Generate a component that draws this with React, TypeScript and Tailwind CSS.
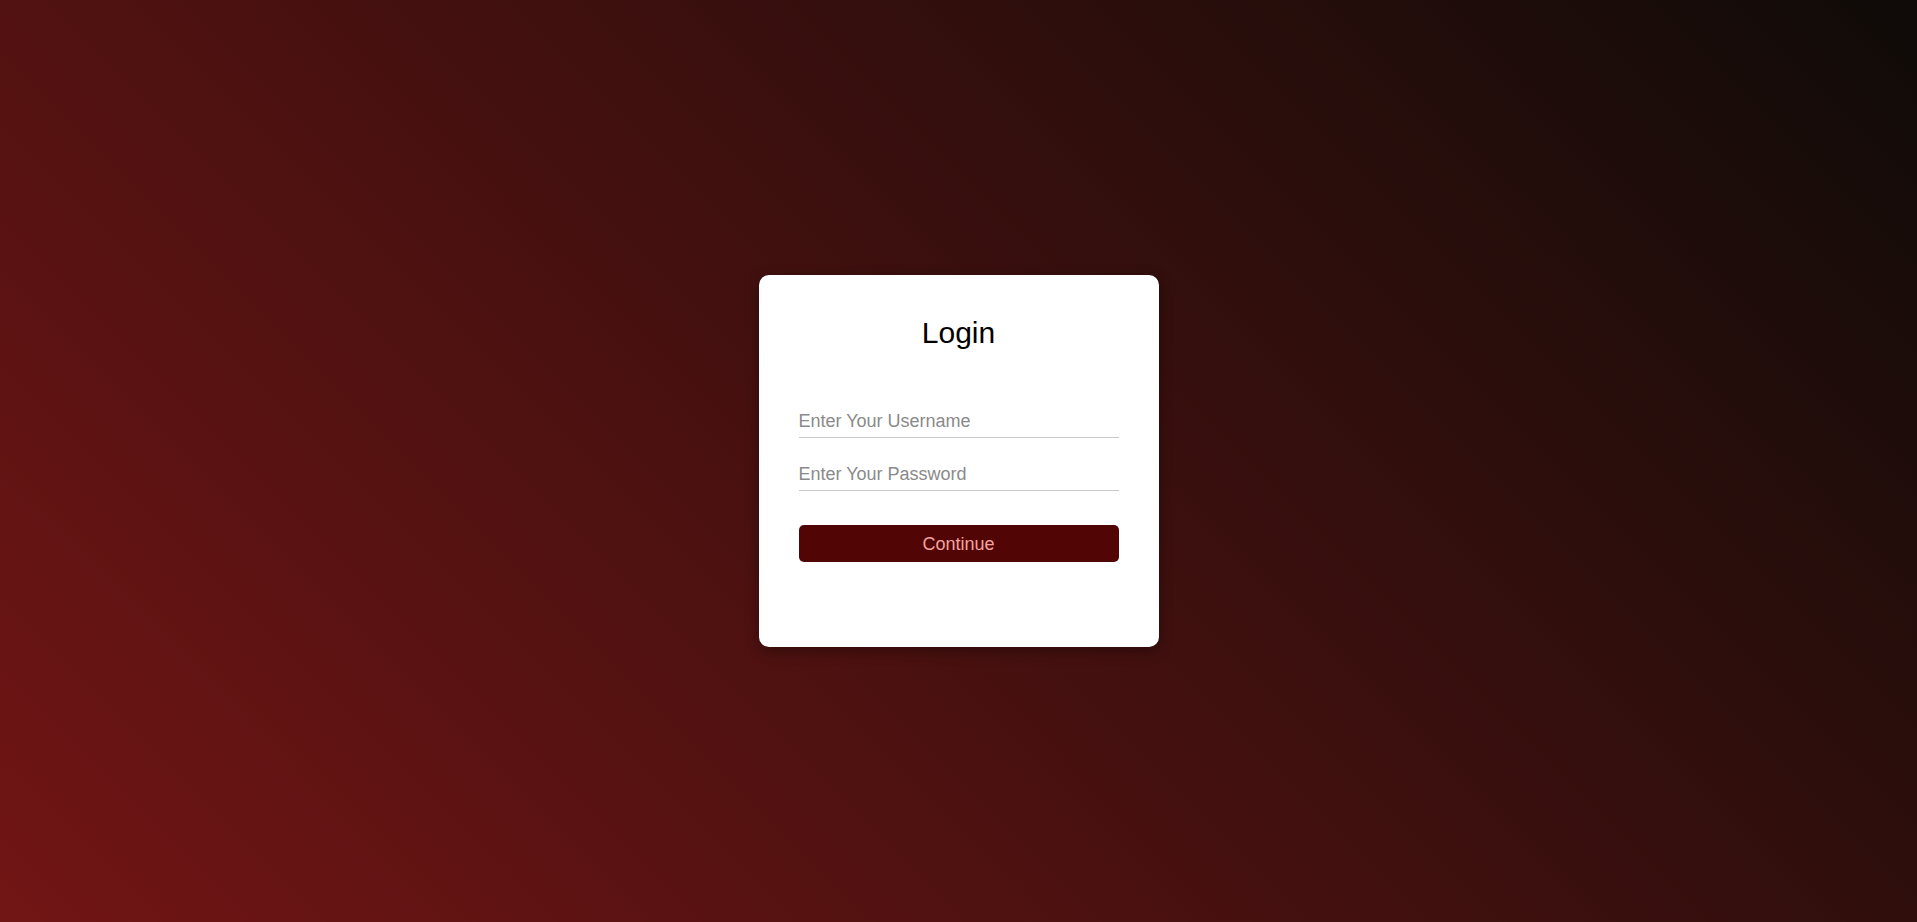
import React, { useState } from 'react';

const App: React.FC = () => {
  const [username, setUsername] = useState<string>('');
  const [password, setPassword] = useState<string>('');

  return (
    <div className="min-h-screen w-full flex items-center justify-center bg-[linear-gradient(45deg,#721515,#0f0b08)] font-['Liberation_Sans',Arial,sans-serif]">
      <div className="w-[400px] h-[372px] bg-white rounded-[10px] shadow-[0_4px_14px_rgba(0,0,0,0.35)] px-10 pt-10 flex flex-col">
        <h1 className="text-[30px] leading-9 text-black text-center">Login</h1>

        <form className="flex flex-col mt-[52px]" onSubmit={(e) => e.preventDefault()}>
          <input
            type="text"
            value={username}
            onChange={(e) => setUsername(e.target.value)}
            placeholder="Enter Your Username"
            className="w-full text-[18px] leading-7 pt-1 pb-0.5 border-b border-[#c8c8c8] outline-none text-black placeholder:text-[#8a8a8a]"
          />
          <input
            type="password"
            value={password}
            onChange={(e) => setPassword(e.target.value)}
            placeholder="Enter Your Password"
            className="w-full text-[18px] leading-7 pt-1 pb-0.5 mt-[18px] border-b border-[#c8c8c8] outline-none text-black placeholder:text-[#8a8a8a]"
          />
          <button
            type="submit"
            className="w-full h-[37px] mt-[34px] rounded-[5px] bg-[#520505] text-[#f2a3a0] text-[18px] leading-none"
          >
            Continue
          </button>
        </form>
      </div>
    </div>
  );
};

export default App;
